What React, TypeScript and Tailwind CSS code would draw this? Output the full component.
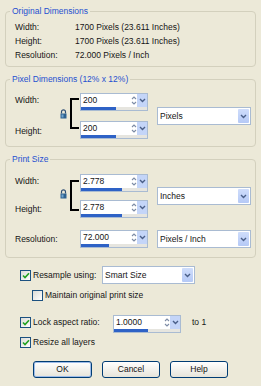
import React from "react";

const font = { fontFamily: '"Liberation Sans", Arial, sans-serif' };

function Chevron() {
  return (
    <svg width="7" height="5" viewBox="0 0 7 5">
      <path d="M1 1 L3.5 3.5 L6 1" fill="none" stroke="#4A5F88" strokeWidth="1.4" />
    </svg>
  );
}

function SpinArrows() {
  return (
    <svg width="6" height="11" viewBox="0 0 6 11">
      <path d="M1 4 L3 2 L5 4" fill="none" stroke="#7D8CA6" strokeWidth="1.1" />
      <path d="M1 7 L3 9 L5 7" fill="none" stroke="#7D8CA6" strokeWidth="1.1" />
    </svg>
  );
}

function SpinBox({ value, fill }: { value: string; fill: number }) {
  return (
    <div className="flex h-[18px] w-[68px] flex-col border border-[#A9BBD2] bg-white">
      <div className="flex flex-1">
        <span className="flex-1 pl-[2px] leading-[13px]">{value}</span>
        <span className="flex w-[7px] items-center justify-center">
          <SpinArrows />
        </span>
        <span className="flex w-[10px] items-center justify-center bg-[#C4D5F8]">
          <Chevron />
        </span>
      </div>
      <div className="h-[3px] bg-[#E6E5DF]">
        <div className="h-full bg-[#2E62C6]" style={{ width: fill }} />
      </div>
    </div>
  );
}

function Select({ value, w = "w-[94px]" }: { value: string; w?: string }) {
  return (
    <div className={`flex h-[18px] ${w} border border-[#A9BBD2] bg-white`}>
      <span className="flex-1 pl-[2px] leading-[16px]">{value}</span>
      <span className="m-[1px] flex w-[11px] items-center justify-center rounded-[1px] bg-gradient-to-b from-[#CFDDFB] to-[#B5C9F6]">
        <Chevron />
      </span>
    </div>
  );
}

function Check({ on = true }: { on?: boolean }) {
  return (
    <span className="flex h-[11px] w-[11px] items-center justify-center border border-[#1C5180] bg-gradient-to-br from-[#DCDCD7] to-white">
      {on && (
        <svg width="8" height="7" viewBox="0 0 8 7">
          <path d="M1 3.5 L3 5.5 L7 1.2" fill="none" stroke="#21A121" strokeWidth="1.6" />
        </svg>
      )}
    </span>
  );
}

function Lock() {
  return (
    <svg width="7" height="10" viewBox="0 0 7 10">
      <path d="M1.5 4.5 V2.8 A2 2 0 0 1 5.5 2.8 V4.5" fill="none" stroke="#2D4E73" strokeWidth="1.2" />
      <rect x="0.5" y="4.5" width="6" height="5" fill="#2E6290" />
      <rect x="1.5" y="5.5" width="2" height="3" fill="#6FA3CF" />
    </svg>
  );
}

function Bracket({ className }: { className: string }) {
  return (
    <div className={`w-[9px] border-y-2 border-l-2 border-black ${className}`} />
  );
}

function Group({ title, className = "", children }: { title: string; className?: string; children: React.ReactNode }) {
  return (
    <fieldset className={`mx-[5px] rounded-[4px] border border-[#D3D0BD] ${className}`}>
      <legend className="ml-[4px] px-[2px] leading-[10px] text-[#1F50D0]">{title}</legend>
      {children}
    </fieldset>
  );
}

function Button({ label, def = false }: { label: string; def?: boolean }) {
  return (
    <button
      className={`h-[17px] rounded-[3px] border border-[#003C74] bg-gradient-to-b from-white to-[#E6E4DA] leading-[13px] text-[#111] ${
        def ? "w-[59px] shadow-[inset_0_0_0_1px_#9DBCE9]" : "w-[58px]"
      }`}
    >
      {label}
    </button>
  );
}

export default function App() {
  return (
    <div className="h-[386px] w-[261px] bg-[#ECE9D8] pt-[6px] text-[8.5px] text-[#151515]" style={font}>
      <Group title="Original Dimensions">
        <div className="pl-[9px] pt-[4px] pb-[4px]">
          {[
            ["Width:", "1700 Pixels (23.611 Inches)"],
            ["Height:", "1700 Pixels (23.611 Inches)"],
            ["Resolution:", "72.000 Pixels / Inch"],
          ].map(([k, v]) => (
            <div key={k} className="flex h-[14px] items-center">
              <span className="w-[60px]">{k}</span>
              <span>{v}</span>
            </div>
          ))}
        </div>
      </Group>

      <Group title="Pixel Dimensions (12% x 12%)" className="mt-[7px]">
        <div className="flex items-center pl-[9px] pt-[9px] pb-[7px]">
          <div className="flex w-[45px] flex-col gap-[10px]">
            <span className="h-[18px] leading-[14px]">Width:</span>
            <span className="h-[18px] leading-[20px]">Height:</span>
          </div>
          <div className="mb-[4px] w-[10px]">
            <Lock />
          </div>
          <Bracket className="h-[31px] mb-[5px]" />
          <div className="ml-[1px] flex flex-col gap-[10px]">
            <SpinBox value="200" fill={35} />
            <SpinBox value="200" fill={35} />
          </div>
          <div className="ml-[9px]">
            <Select value="Pixels" />
          </div>
        </div>
      </Group>

      <Group title="Print Size" className="mt-[7px]">
        <div className="pl-[9px] pt-[10px] pb-[9px]">
          <div className="flex items-center">
            <div className="flex w-[45px] flex-col gap-[8px]">
              <span className="h-[18px] leading-[15px]">Width:</span>
              <span className="h-[18px] leading-[19px]">Height:</span>
            </div>
            <div className="mb-[4px] w-[10px]">
              <Lock />
            </div>
            <Bracket className="h-[31px] mb-[2px]" />
            <div className="ml-[1px] flex flex-col gap-[8px]">
              <SpinBox value="2.778" fill={41} />
              <SpinBox value="2.778" fill={41} />
            </div>
            <div className="ml-[9px]">
              <Select value="Inches" />
            </div>
          </div>
          <div className="mt-[12px] flex items-start">
            <span className="h-[18px] w-[65px] leading-[18px]">Resolution:</span>
            <SpinBox value="72.000" fill={28} />
            <div className="ml-[9px]">
              <Select value="Pixels / Inch" />
            </div>
          </div>
        </div>
      </Group>

      <div className="pl-[20px]">
        <div className="mt-[8px] flex h-[18px] items-center">
          <Check />
          <span className="ml-[2px] w-[69px]">Resample using:</span>
          <Select value="Smart Size" w="w-[93px]" />
        </div>
        <div className="ml-[12px] mt-[6px] flex h-[11px] items-center">
          <Check on={false} />
          <span className="ml-[2px]">Maintain original print size</span>
        </div>
        <div className="mt-[14px] flex items-start">
          <div className="flex h-[15px] w-[93px] items-center">
            <Check />
            <span className="ml-[2px]">Lock aspect ratio:</span>
          </div>
          <div className="w-[70px]">
            <SpinBox value="1.0000" fill={34} />
          </div>
          <span className="ml-[9px] leading-[15px]">to 1</span>
        </div>
        <div className="mt-[4px] flex h-[11px] items-center">
          <Check />
          <span className="ml-[2px]">Resize all layers</span>
        </div>
      </div>

      <div className="mt-[13px] flex gap-[10px] pl-[33px]">
        <Button label="OK" def />
        <Button label="Cancel" />
        <Button label="Help" />
      </div>
    </div>
  );
}
